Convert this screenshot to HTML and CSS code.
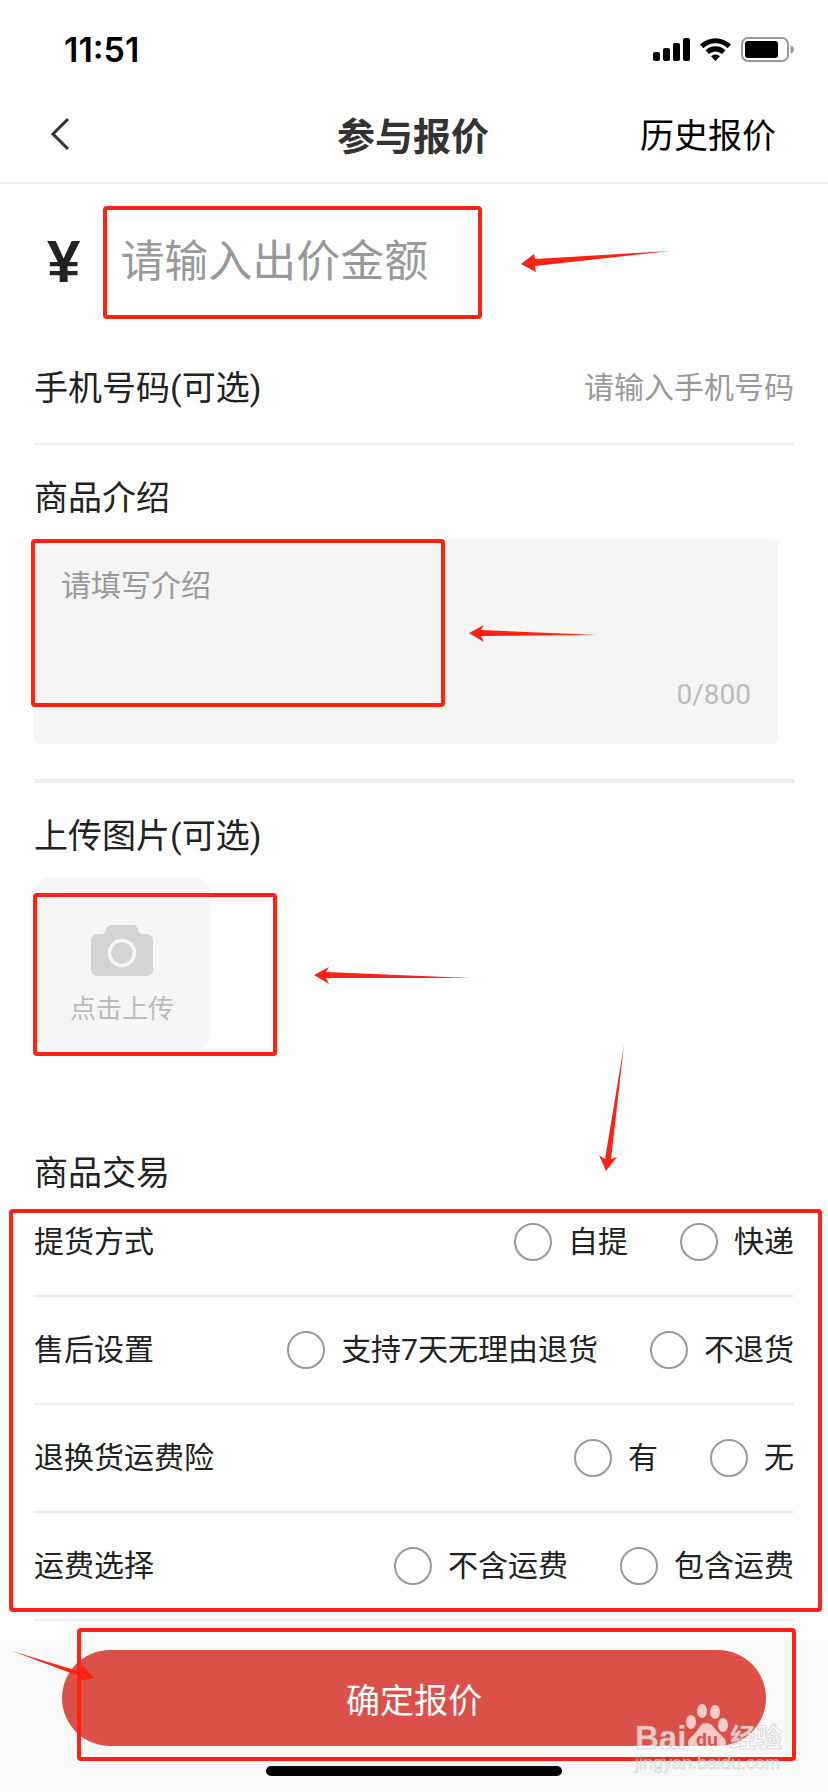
FILE: index.html
```html
<!DOCTYPE html>
<html lang="zh-CN">
<head>
<meta charset="utf-8">
<meta name="viewport" content="width=device-width">
<title>参与报价</title>
<link rel="stylesheet" href="styles.css">
</head>
<body>
<div class="page">
  <div class="status">
    <span class="time">11:51</span>
    <svg class="status-icons" width="142" height="28" viewBox="0 0 142 28" aria-hidden="true">
      <rect x="1" y="16" width="7" height="9" rx="2"/>
      <rect x="11" y="12" width="7" height="13" rx="2"/>
      <rect x="21" y="7" width="7" height="18" rx="2"/>
      <rect x="31" y="2" width="7" height="23" rx="2"/>
      <path d="M48 8.500a22.500 22.500 0 0 1 31 0l-3.400 3.700a17.500 17.500 0 0 0-24.200 0z"/>
      <path d="M53.500 14.300a14.500 14.500 0 0 1 20 0l-3.500 3.700a9.500 9.500 0 0 0-13 0z"/>
      <path d="M59 20.200a6.600 6.600 0 0 1 9 0L63.500 25z"/>
      <rect x="90" y="2" width="46" height="23" rx="6" fill="none" stroke="#999" stroke-width="2"/>
      <rect x="93" y="5" width="33" height="17" rx="3"/>
      <path d="M138.500 9.500q3.500 1 3.500 4t-3.500 4z" fill="#999"/>
    </svg>
  </div>
  <header class="header">
    <button class="back" type="button" aria-label="返回">
      <svg width="20" height="34" viewBox="0 0 20 34" fill="none" stroke="#333" stroke-width="3"><path d="M18 2 3 17l15 15"/></svg>
    </button>
    <h1 class="title">参与报价</h1>
    <a class="history" href="#">历史报价</a>
  </header>

  <form class="form">
    <div class="price">
      <label class="yen" for="price">¥</label>
      <input class="price-input" id="price" type="text" placeholder="请输入出价金额">
    </div>
    <div class="phone">
      <label class="label" for="phone">手机号码(可选)</label>
      <input class="phone-input" id="phone" type="tel" placeholder="请输入手机号码">
    </div>

    <section class="intro">
      <label class="label heading" for="intro">商品介绍</label>
      <div class="intro-box">
        <textarea class="intro-input" id="intro" placeholder="请填写介绍"></textarea>
        <span class="count">0/800</span>
      </div>
    </section>

    <section class="upload">
      <h2 class="label heading">上传图片(可选)</h2>
      <button class="upload-button" type="button">
        <svg width="64" height="52" viewBox="0 0 64 52" aria-hidden="true">
          <path fill="#d4d4d4" d="M8 9h3q4 0 5-4 1-5 5-5h22q4 0 5 5 1 4 5 4h3q7 0 7 8v27q0 7-7 7H8q-7 0-7-7V17q0-8 7-8z"/>
          <circle cx="32" cy="28" r="12.500" fill="none" stroke="#f6f6f6" stroke-width="3.500"/>
        </svg>
        点击上传
      </button>
    </section>

    <section class="trade">
      <h2 class="label trade-title">商品交易</h2>
      <div class="row" role="radiogroup" aria-label="提货方式">
        <span class="name">提货方式</span>
        <label class="option"><input class="radio" type="radio" name="delivery">自提</label>
        <label class="option"><input class="radio" type="radio" name="delivery">快递</label>
      </div>
      <div class="row" role="radiogroup" aria-label="售后设置">
        <span class="name">售后设置</span>
        <label class="option"><input class="radio" type="radio" name="service">支持7天无理由退货</label>
        <label class="option"><input class="radio" type="radio" name="service">不退货</label>
      </div>
      <div class="row" role="radiogroup" aria-label="退换货运费险">
        <span class="name">退换货运费险</span>
        <label class="option"><input class="radio" type="radio" name="insurance">有</label>
        <label class="option"><input class="radio" type="radio" name="insurance">无</label>
      </div>
      <div class="row" role="radiogroup" aria-label="运费选择">
        <span class="name">运费选择</span>
        <label class="option"><input class="radio" type="radio" name="freight">不含运费</label>
        <label class="option"><input class="radio" type="radio" name="freight">包含运费</label>
      </div>
    </section>

    <footer class="footer">
      <button class="submit" type="submit">确定报价</button>
      <div class="home-bar"></div>
    </footer>
  </form>

  <svg class="marks" width="828" height="1792" viewBox="0 0 828 1792" aria-hidden="true">
    <g fill="none" stroke="#ff2112" stroke-width="4">
      <rect x="105" y="208" width="375" height="109" rx="2"/>
      <rect x="33" y="541" width="410" height="164" rx="2"/>
      <rect x="35" y="895" width="240" height="159" rx="2"/>
      <rect x="11" y="1211" width="809" height="399" rx="2"/>
      <rect x="79" y="1630" width="715" height="129" rx="2"/>
    </g>
    <g fill="#ff2112">
      <path d="M521 264l13-10 1 5 135-8-135 15 1 6z"/>
      <path d="M469 633l15-8-3 5 116 5-116 1 3 6z"/>
      <path d="M314 975l15-8-3 5 144 6-144 0 3 6z"/>
      <path d="M606 1171l-7-16 6 4 19-114-13 114 6-2z"/>
      <path d="M94 1678l-12-13-1 7-69-21 67 25 1 5z"/>
    </g>
    <g class="watermark">
      <text class="wm-brand" x="635" y="1749">Bai</text>
      <g class="wm-paw">
        <ellipse cx="691" cy="1722" rx="5" ry="7"/>
        <ellipse cx="702" cy="1711" rx="5" ry="7"/>
        <ellipse cx="715" cy="1712" rx="5" ry="7"/>
        <ellipse cx="723" cy="1725" rx="5" ry="7"/>
        <path d="M706 1723c6 0 8 5 12 9s8 7 8 11c0 6-5 7-9 7h-21c-4 0-8-2-8-7s5-7 8-11 5-9 10-9z"/>
      </g>
      <text class="wm-du" x="696" y="1746">du</text>
      <text class="wm-cn" x="730" y="1747">经验</text>
      <text class="wm-url" x="635" y="1769">jingyan.baidu.com</text>
    </g>
  </svg>
</div>
</body>
</html>
```
FILE: styles.css
```css
* { box-sizing: border-box; }

body {
  margin: 0;
  background: #fff;
  color: #222;
  font-family: Roboto, "Noto Sans CJK SC", sans-serif;
}

.page { position: relative; min-height: 100vh; overflow: hidden; }

input, textarea, button {
  margin: 0;
  padding: 0;
  border: 0;
  background: none;
  color: inherit;
  font-family: inherit;
  outline: 0;
}

.status {
  display: flex;
  align-items: center;
  justify-content: space-between;
  height: 88px;
  padding: 12px 34px 0 64px;
  color: #000;
}
.time { font: 600 34px/36px Inter, sans-serif; }

.header {
  display: grid;
  grid-template-columns: 1fr auto 1fr;
  align-items: center;
  height: 96px;
  padding: 0 52px 2px 50px;
  border-bottom: 2px solid #eee;
  font-family: "Noto Sans CJK SC", sans-serif;
}
.back { justify-self: start; display: flex; }
.title { margin: 0; font-size: 38px; line-height: 44px; font-weight: 700; color: #333; }
.history { justify-self: end; font-size: 34px; line-height: 40px; color: #000; text-decoration: none; }

.label { margin: 0; font-size: 34px; line-height: 36px; font-weight: 400; }
.heading { display: block; margin-bottom: 23px; }

.price { display: flex; align-items: center; gap: 40px; height: 156px; padding: 0 34px 0 47px; }
.yen { font: 700 60px/60px "Liberation Sans", sans-serif; }
.price-input { flex: 1; min-width: 0; height: 64px; font-size: 44px; }

.phone {
  display: flex;
  align-items: center;
  justify-content: space-between;
  height: 105px;
  margin: 0 34px;
  padding-bottom: 8px;
  border-bottom: 2px solid #eee;
}
.phone-input { flex: 1; min-width: 0; height: 44px; font-size: 30px; text-align: right; }

::placeholder { color: #999; opacity: 1; }

.intro { margin: 0 34px; padding: 35px 0; border-bottom: 4px solid #eee; }
.intro-box {
  display: flex;
  flex-direction: column;
  height: 205px;
  margin-right: 16px;
  padding: 25px 27px 29px;
  border-radius: 6px;
  background: #f5f5f5;
}
.intro-input { flex: 1; min-height: 0; resize: none; font-size: 30px; line-height: 44px; }
.count { align-self: flex-end; font-size: 28px; line-height: 40px; color: #bbb; }

.upload { margin: 0 34px; padding: 35px 0 69px; }
.upload-button {
  display: flex;
  flex-direction: column;
  align-items: center;
  gap: 14px;
  width: 176px;
  height: 173px;
  padding-top: 48px;
  border-radius: 16px;
  background: #f6f6f6;
  color: #bbb;
  font-size: 26px;
  line-height: 36px;
}

.trade { margin: 0 34px 19px; padding-top: 34px; }
.trade-title { font-family: "Noto Sans CJK SC", sans-serif; }
.row {
  display: flex;
  align-items: center;
  gap: 52px;
  height: 108px;
  border-bottom: 2px solid #eee;
  font-size: 30px;
  line-height: 44px;
}
.name { flex: 1; }
.option { display: flex; align-items: center; gap: 16px; }
.radio {
  appearance: none;
  width: 38px;
  height: 38px;
  border: 2px solid #999;
  border-radius: 50%;
}

.footer {
  display: flex;
  flex-direction: column;
  align-items: center;
  gap: 20px;
  padding: 10px 62px 16px;
  background: #f9f9f9;
}
.submit {
  width: 100%;
  height: 96px;
  border-radius: 48px;
  background: #db5049;
  color: #fff;
  font-size: 34px;
}
.home-bar { width: 296px; height: 10px; border-radius: 5px; background: #000; }

.marks { position: absolute; top: 0; left: 0; pointer-events: none; }
.watermark { fill: #fff; fill-opacity: .7; stroke: #aaa; stroke-opacity: .4; stroke-width: 1; }
.wm-brand { font: 700 33px "Liberation Sans", sans-serif; }
.wm-paw { stroke: none; }
.wm-du { font: 700 18px "Liberation Sans", sans-serif; fill: #db5049; fill-opacity: 1; stroke: none; }
.wm-cn { font: 700 26px "Noto Sans CJK SC", sans-serif; }
.wm-url { font: 400 18px "Liberation Sans", sans-serif; }
```
